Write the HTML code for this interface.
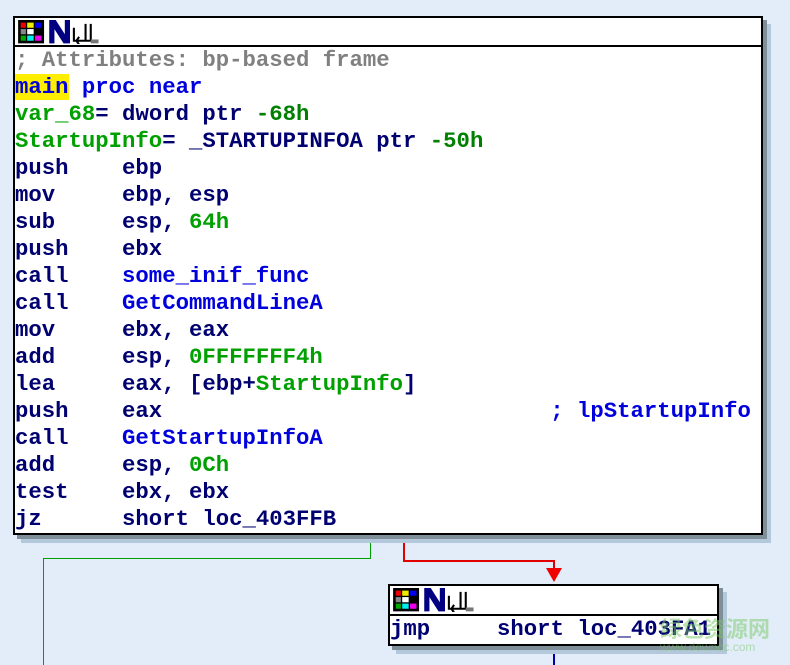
<!DOCTYPE html>
<html><head><style>
body{margin:0;width:790px;height:665px;background:#e2edf9;position:relative;overflow:hidden;font-family:"Liberation Mono",monospace;}
.box{position:absolute;background:#fff;border:2px solid #000;box-shadow:4px 4px 0 #7f8f9a,8px 8px 0 #b4c8dc;}
.hdr{height:27px;border-bottom:2px solid #000;position:relative;}
.code{font-weight:bold;font-size:22.3px;line-height:27px;white-space:pre;color:#000070;padding-left:0;}
.c{color:#808080}.b{color:#0000dd}.g{color:#00a000}.gd{color:#008000}
.hl{background:#ffee00}
.ln{position:absolute;}
</style></head><body>
<div class="ln" style="left:370px;top:533px;width:1px;height:26px;background:#00a000"></div>
<div class="ln" style="left:43px;top:558px;width:328px;height:1px;background:#00a000"></div>
<div class="ln" style="left:43px;top:558px;width:1px;height:107px;background:#00a000"></div>
<div class="ln" style="left:403px;top:533px;width:2px;height:29px;background:#e00000"></div>
<div class="ln" style="left:403px;top:560px;width:152px;height:2px;background:#e00000"></div>
<div class="ln" style="left:553px;top:560px;width:2px;height:12px;background:#e00000"></div>
<svg class="ln" style="left:546px;top:568px" width="16" height="16"><path d="M0 0H16L8 14Z" fill="#f00000"/></svg>
<div class="ln" style="left:553px;top:645px;width:2px;height:20px;background:#0000aa"></div>

<div class="box" style="left:13px;top:16px;width:746px;height:515px;">
 <div class="hdr">
  <svg style="position:absolute;left:3px;top:2px" width="104" height="24" viewBox="0 0 80 18.5">
   <rect x="0" y="0" width="20" height="18" fill="#000"/>
   <rect x="2" y="2" width="4" height="4" fill="#e00"/><rect x="7" y="2" width="5" height="4" fill="#ee0"/><rect x="13" y="2" width="5" height="4" fill="#00e"/>
   <rect x="2" y="7" width="4" height="4" fill="#888"/><rect x="7" y="7" width="5" height="4" fill="#fff"/>
   <rect x="2" y="12" width="4" height="4" fill="#0a0"/><rect x="7" y="12" width="5" height="4" fill="#0ee"/><rect x="13" y="12" width="5" height="4" fill="#e0e"/>
   <path d="M24 0h5l7 11V0h4v18h-5l-7-11v11h-4z" fill="#000080"/>
   <path d="M43 6v10h10M47 13l-2 3 2 3M52 3v13M56 3v13M51 16h10" stroke="#000" stroke-width="1.6" fill="none"/>
   <rect x="56" y="15" width="6" height="3" fill="#777"/>
  </svg>
 </div>
 <div class="code"><span class="c">; Attributes: bp-based frame</span>
<span class="b"><span class="hl">main</span> proc near</span>
<span class="g">var_68</span>= dword ptr <span class="gd">-68h</span>
<span class="g">StartupInfo</span>= _STARTUPINFOA ptr <span class="gd">-50h</span>
push    ebp
mov     ebp, esp
sub     esp, <span class="g">64h</span>
push    ebx
call    <span class="b">some_inif_func</span>
call    <span class="b">GetCommandLineA</span>
mov     ebx, eax
add     esp, <span class="g">0FFFFFFF4h</span>
lea     eax, [ebp+<span class="g">StartupInfo</span>]
push    eax                             <span class="b">; lpStartupInfo</span>
call    <span class="b">GetStartupInfoA</span>
add     esp, <span class="g">0Ch</span>
test    ebx, ebx
jz      short loc_403FFB</div>
</div>

<div class="box" style="left:388px;top:584px;width:327px;height:58px;">
 <div class="hdr" style="height:28px">
  <svg style="position:absolute;left:3px;top:2px" width="104" height="24" viewBox="0 0 80 18.5">
   <rect x="0" y="0" width="20" height="18" fill="#000"/>
   <rect x="2" y="2" width="4" height="4" fill="#e00"/><rect x="7" y="2" width="5" height="4" fill="#ee0"/><rect x="13" y="2" width="5" height="4" fill="#00e"/>
   <rect x="2" y="7" width="4" height="4" fill="#888"/><rect x="7" y="7" width="5" height="4" fill="#fff"/>
   <rect x="2" y="12" width="4" height="4" fill="#0a0"/><rect x="7" y="12" width="5" height="4" fill="#0ee"/><rect x="13" y="12" width="5" height="4" fill="#e0e"/>
   <path d="M24 0h5l7 11V0h4v18h-5l-7-11v11h-4z" fill="#000080"/>
   <path d="M43 6v10h10M47 13l-2 3 2 3M52 3v13M56 3v13M51 16h10" stroke="#000" stroke-width="1.6" fill="none"/>
   <rect x="56" y="15" width="6" height="3" fill="#777"/>
  </svg>
 </div>
 <div class="code" style="line-height:26px">jmp     short loc_403FA1</div>
</div>
<div class="ln" style="left:660px;top:612px;font:bold 22px 'Noto Sans CJK SC',sans-serif;color:rgba(120,200,100,0.5)">绿色资源网</div>
<div class="ln" style="left:660px;top:640px;font:12px 'Liberation Sans',sans-serif;color:rgba(120,200,100,0.5)">www.downcc.com</div>
</body></html>
